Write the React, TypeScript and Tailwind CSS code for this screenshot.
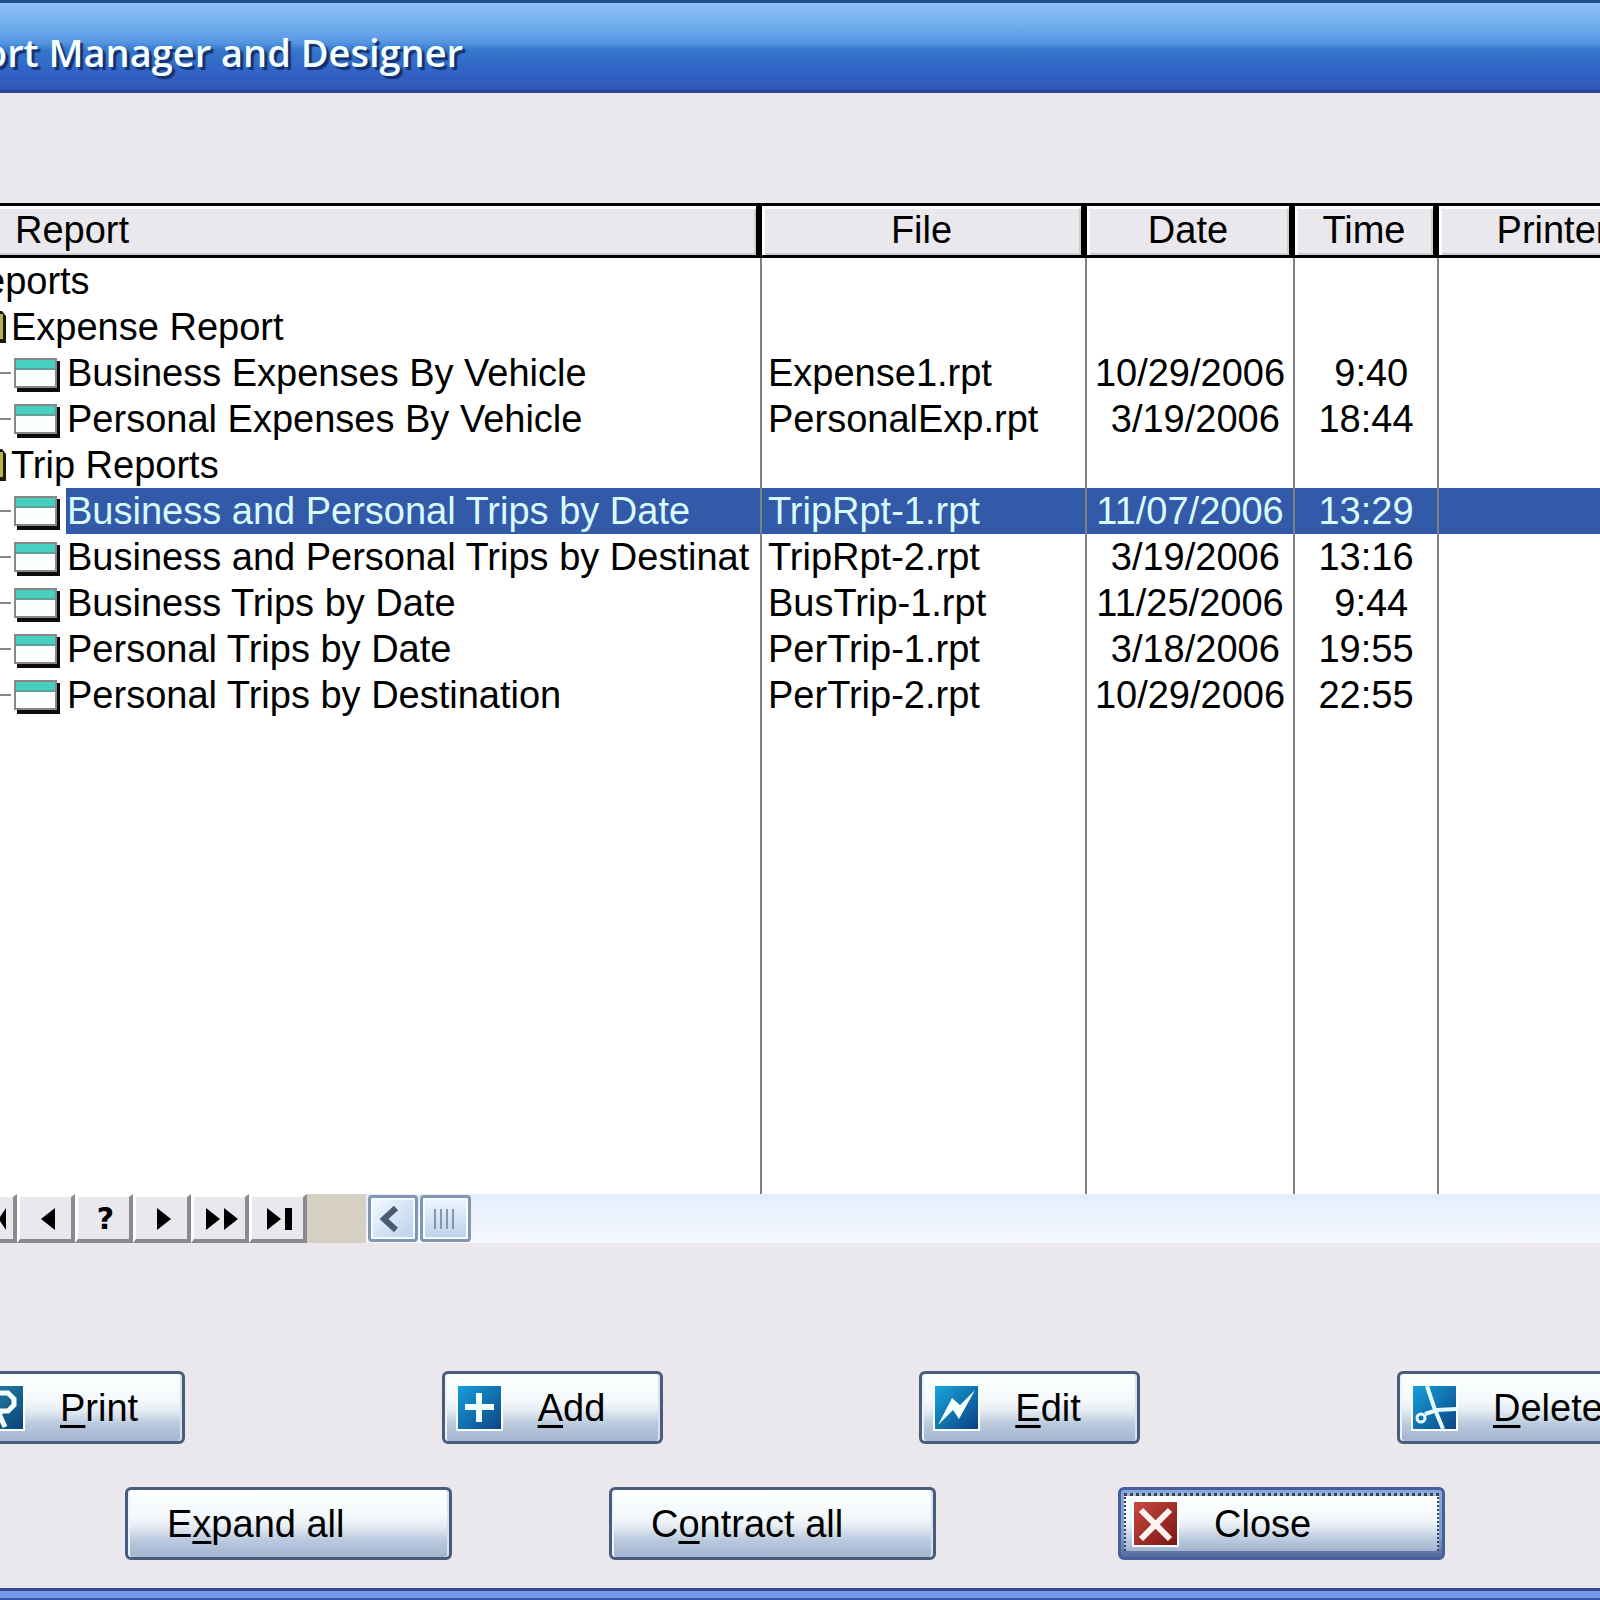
import React from "react";

type Row = {
  kind: "root" | "group" | "report";
  name: string;
  file?: string;
  date?: string;
  time?: string;
  selected?: boolean;
};

const rows: Row[] = [
  { kind: "root", name: "eports" },
  { kind: "group", name: "Expense Report" },
  { kind: "report", name: "Business Expenses By Vehicle", file: "Expense1.rpt", date: "10/29/2006", time: " 9:40" },
  { kind: "report", name: "Personal Expenses By Vehicle", file: "PersonalExp.rpt", date: " 3/19/2006", time: "18:44" },
  { kind: "group", name: "Trip Reports" },
  { kind: "report", name: "Business and Personal Trips by Date", file: "TripRpt-1.rpt", date: "11/07/2006", time: "13:29", selected: true },
  { kind: "report", name: "Business and Personal Trips by Destinat", file: "TripRpt-2.rpt", date: " 3/19/2006", time: "13:16" },
  { kind: "report", name: "Business Trips by Date", file: "BusTrip-1.rpt", date: "11/25/2006", time: " 9:44" },
  { kind: "report", name: "Personal Trips by Date", file: "PerTrip-1.rpt", date: " 3/18/2006", time: "19:55" },
  { kind: "report", name: "Personal Trips by Destination", file: "PerTrip-2.rpt", date: "10/29/2006", time: "22:55" },
];

function ReportIcon() {
  return (
    <svg width="46" height="38" viewBox="0 -4 46 38" className="shrink-0" aria-hidden="true">
      <path d="M3 3H46V34H3Z" fill="#0c0c0c" />
      <path d="M0 0H43V30H0Z" fill="#8b8588" />
      <path d="M2 2H41V10H2Z" fill="#45d0c0" />
      <path d="M2 10H41V12H2Z" fill="#5f9f9b" />
      <path d="M2 12H41V28H2Z" fill="#fbffff" />
    </svg>
  );
}

function FolderEdge() {
  return (
    <svg width="6" height="32" viewBox="0 0 6 32" className="shrink-0" aria-hidden="true">
      <path d="M0 0H2L6 5V32H0Z" fill="#1a1a08" />
      <path d="M0 3H3V28H0Z" fill="#b9b254" />
    </svg>
  );
}

function NameCell({ row }: { row: Row }) {
  if (row.kind === "root") return <div className="-ml-4 h-[46px]">{row.name}</div>;
  if (row.kind === "group")
    return (
      <div className="flex h-[46px] items-center gap-[5px]">
        <FolderEdge />
        <span>{row.name}</span>
      </div>
    );
  return (
    <div className="flex h-[46px] items-center overflow-hidden">
      <span className="h-[2px] w-[11px] shrink-0 bg-[#8d8583]" />
      <span className="w-[3px] shrink-0" />
      <ReportIcon />
      <span className="w-[6px] shrink-0" />
      <span className={row.selected ? "h-full grow bg-[#325aa8] pl-px text-[#d9fbff]" : "h-full grow pl-px"}>
        {row.name}
      </span>
    </div>
  );
}

const headCell = "h-[55px] border-y-[3px] border-black bg-[#eae8ec] p-0 pb-[2px] font-normal";
const headBevel = " shadow-[inset_3px_3px_0_#fdfdfd,inset_-2px_-2px_0_#cfcdd0]";
const headEnd = " border-r-[6px]";

function ToolButton({ label, children }: { label: string; children: React.ReactNode }) {
  return (
    <button
      type="button"
      aria-label={label}
      className="flex h-[49px] w-[58px] shrink-0 items-center justify-center border-t-[3px] border-r-[4px] border-b-[4px] border-l-[3px] border-t-white border-r-[#8c8a8e] border-b-[#8c8a8e] border-l-white bg-[#eae8ec] pt-0.5 pl-1"
    >
      {children}
    </button>
  );
}

const IconFrame = ({ id, from, to, children }: { id: string; from: string; to: string; children: React.ReactNode }) => (
  <svg width="47" height="47" viewBox="-2 -2 47 47" className="shrink-0" aria-hidden="true">
    <defs>
      <linearGradient id={id} x1="0" y1="0" x2="1" y2="1">
        <stop offset="0" stopColor={from} />
        <stop offset="1" stopColor={to} />
      </linearGradient>
    </defs>
    <rect x="-2" y="-2" width="47" height="47" fill="#f8ffff" />
    <rect width="43" height="43" fill={`url(#${id})`} />
    {children}
  </svg>
);

const face =
  "flex h-[73px] shrink-0 items-center rounded-[6px] border-[3px] border-[#4a5c7c] bg-[linear-gradient(180deg,#fdffff_0%,#f4f8fa_40%,#e4ebf2_55%,#b9c9de_75%,#a5b4cf_100%)] text-left shadow-[inset_2px_0_0_#e9f4fb,inset_-2px_0_0_#d5e2f0]";
const key = "underline decoration-[3px] underline-offset-4";

export default function App() {
  return (
    <main className="flex min-h-screen flex-col overflow-hidden bg-[#eae8ec] font-['Liberation_Sans',Arial,sans-serif] text-[38px] leading-[46px] text-black">
      <header className="h-[93px] overflow-hidden border-t-[3px] border-b-[3px] border-t-[#1f4f8f] border-b-[#2d4394] bg-[linear-gradient(180deg,#8fc0f8_0%,#74b2ee_22%,#629fe8_38%,#5394e0_46%,#3478cc_54%,#3166c8_75%,#3355b8_100%)]">
        <h1 className="-ml-4 pt-5 font-['Open_Sans',sans-serif] text-[38px] leading-[58px] font-semibold whitespace-nowrap text-[#f4ffff] [text-shadow:3px_3px_1px_#16306e]">
          ort Manager and Designer
        </h1>
      </header>

      <section className="mt-[110px] flex h-[991px] flex-col bg-white">
        <div className="flex grow flex-col overflow-hidden">
          <table className="h-full w-[1666px] table-fixed border-separate border-spacing-0 whitespace-pre">
            <colgroup>
              <col className="w-[762px]" />
              <col className="w-[325px]" />
              <col className="w-[208px]" />
              <col className="w-[144px]" />
              <col />
            </colgroup>
            <thead>
              <tr>
                <th className={headCell + headEnd + " pl-[15px] text-left shadow-[inset_0_3px_0_#fdfdfd,inset_-2px_-2px_0_#cfcdd0]"}>
                  Report
                </th>
                <th className={headCell + headEnd + headBevel}>File</th>
                <th className={headCell + headEnd + headBevel}>Date</th>
                <th className={headCell + headEnd + headBevel}>Time</th>
                <th className={headCell + headBevel}>Printer</th>
              </tr>
            </thead>
            <tbody>
              {rows.map((row) => (
                <tr key={row.name} className={row.selected ? "h-[46px] bg-[#325aa8] text-[#d9fbff]" : "h-[46px]"}>
                  <td className="overflow-hidden border-r-2 border-[#808080] bg-white p-0 text-black">
                    <NameCell row={row} />
                  </td>
                  <td className="border-r-2 border-[#808080] p-0 pl-[6px]">{row.file}</td>
                  <td className="border-r-2 border-[#808080] p-0 text-center">{row.date}</td>
                  <td className="border-r-2 border-[#808080] p-0 text-center">{row.time}</td>
                  <td className="p-0" />
                </tr>
              ))}
              <tr>
                <td className="border-r-2 border-[#808080] p-0" />
                <td className="border-r-2 border-[#808080] p-0" />
                <td className="border-r-2 border-[#808080] p-0" />
                <td className="border-r-2 border-[#808080] p-0" />
                <td className="p-0" />
              </tr>
            </tbody>
          </table>
        </div>
      </section>

      <div className="flex h-[49px] items-center bg-[linear-gradient(180deg,#e4edfd,#f6faff)]">
        <button
          type="button"
          aria-label="First"
          className="flex h-[49px] w-[17px] shrink-0 items-center border-t-[3px] border-r-[4px] border-b-[4px] border-t-white border-r-[#8c8a8e] border-b-[#8c8a8e] bg-[#eae8ec] pt-0.5"
        >
          <svg width="6" height="22" viewBox="0 0 6 22" aria-hidden="true">
            <path d="M6 0V22L0 13V9Z" />
          </svg>
        </button>
        <ToolButton label="Previous">
          <svg width="14" height="22" viewBox="0 0 14 22" aria-hidden="true">
            <path d="M14 0V22L0 11Z" />
          </svg>
        </ToolButton>
        <ToolButton label="Find">
          <span className="font-['DejaVu_Sans',sans-serif] text-[30px] font-bold">?</span>
        </ToolButton>
        <ToolButton label="Next">
          <svg width="14" height="22" viewBox="0 0 14 22" aria-hidden="true">
            <path d="M0 0V22L14 11Z" />
          </svg>
        </ToolButton>
        <ToolButton label="Page down">
          <svg width="32" height="22" viewBox="0 0 32 22" aria-hidden="true">
            <path d="M0 0V22L14 11ZM18 0V22L32 11Z" />
          </svg>
        </ToolButton>
        <ToolButton label="Last">
          <svg width="26" height="22" viewBox="0 0 26 22" aria-hidden="true">
            <path d="M0 0V22L14 11ZM18 0H25V22H18Z" />
          </svg>
        </ToolButton>
        <span className="mr-0.5 h-full w-[59px] shrink-0 bg-[#d6cfc4]" />
        <button
          type="button"
          aria-label="Scroll left"
          className="flex h-[47px] w-[50px] shrink-0 items-center justify-center rounded-[4px] border-[3px] border-[#8197af] bg-[linear-gradient(135deg,#f4faff,#b9d0ec)] pr-2 shadow-[inset_0_0_0_2px_#f6fbff]"
        >
          <svg width="20" height="28" viewBox="0 0 20 28" fill="none" stroke="#4a5a72" strokeWidth="6" aria-hidden="true">
            <path d="M17 3L5 14L17 25" />
          </svg>
        </button>
        <button
          type="button"
          aria-label="Scroll thumb"
          className="ml-0.5 flex h-[47px] w-[51px] shrink-0 items-center justify-center gap-1 rounded-[4px] border-[3px] border-[#8197af] bg-[linear-gradient(180deg,#eff7fe,#b9d0ec)] pr-1 shadow-[inset_0_0_0_2px_#f6fbff]"
        >
          <span className="h-5 w-0.5 bg-[#8796ac]" />
          <span className="h-5 w-0.5 bg-[#8796ac]" />
          <span className="h-5 w-0.5 bg-[#8796ac]" />
          <span className="h-5 w-0.5 bg-[#8796ac]" />
        </button>
      </div>

      <div className="mt-32 -ml-9 flex w-[1654px] justify-between">
        <button type="button" className={face + " w-[221px] gap-[35px] pl-[11px]"}>
          <IconFrame id="g-print" from="#2a86ac" to="#0c437c">
            <path d="M8 7H28L34 13V19L28 25H20V30L25 41" fill="none" stroke="#f4ffff" strokeWidth="5" />
          </IconFrame>
          <span>
            <span className={key}>P</span>rint
          </span>
        </button>
        <button type="button" className={face + " w-[221px] gap-[35px] pl-[11px]"}>
          <IconFrame id="g-add" from="#16a0dc" to="#0d4484">
            <path d="M21 7V36M7 21H36" stroke="#f4ffff" strokeWidth="6" />
          </IconFrame>
          <span>
            <span className={key}>A</span>dd
          </span>
        </button>
        <button type="button" className={face + " w-[221px] gap-[35px] pl-[11px]"}>
          <IconFrame id="g-edit" from="#16a8dc" to="#0d3f84">
            <path d="M3 39L17 12L25 19L40 4L24 33L18 24Z" fill="#f4ffff" />
          </IconFrame>
          <span>
            <span className={key}>E</span>dit
          </span>
        </button>
        <button type="button" className={face + " w-[221px] gap-[35px] pl-[11px]"}>
          <IconFrame id="g-delete" from="#16a0dc" to="#0d4484">
            <path d="M14 0L21 21L30 43M43 23L24 24L12 28" fill="none" stroke="#e4fbff" strokeWidth="4" />
            <circle cx="8" cy="32" r="4" fill="none" stroke="#e4fbff" strokeWidth="3" />
          </IconFrame>
          <span>
            <span className={key}>D</span>elete
          </span>
        </button>
      </div>

      <div className="mt-[43px] flex pl-[125px]">
        <button type="button" className={face + " mr-[157px] w-[327px] pl-[39px]"}>
          <span>
            E<span className={key}>x</span>pand all
          </span>
        </button>
        <button type="button" className={face + " mr-[182px] w-[327px] pl-[39px]"}>
          <span>
            C<span className={key}>o</span>ntract all
          </span>
        </button>
        <button
          type="button"
          className="flex h-[73px] w-[327px] shrink-0 rounded-[6px] border-[3px] border-[#47609c] bg-[linear-gradient(180deg,#86a8dc,#7d9cd0_70%,#536a9c)] p-[3px] pb-[6px] text-left"
        >
          <span className="flex grow items-center gap-[35px] border-x-[2px] border-t-[3px] border-dotted border-[#34425c] bg-[linear-gradient(180deg,#fdffff_0%,#f4f8fa_40%,#e4ebf2_55%,#b9c9de_80%,#a5b4cf_100%)] pl-[6px]">
            <IconFrame id="g-close" from="#c84a40" to="#7c1414">
              <path d="M7 8L36 37M36 8L7 37" stroke="#fff4f0" strokeWidth="6" />
            </IconFrame>
            <span>Close</span>
          </span>
        </button>
      </div>

      <footer className="mt-auto h-3 border-t-[3px] border-b-2 border-t-[#324a8c] border-b-[#3556ac] bg-[#779be8]" />
    </main>
  );
}
